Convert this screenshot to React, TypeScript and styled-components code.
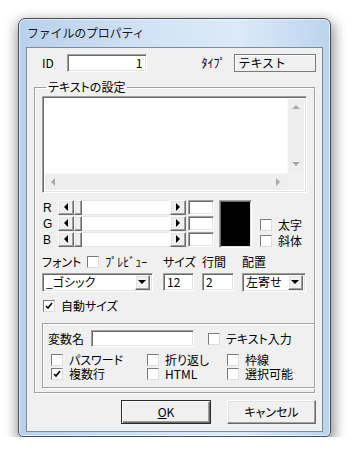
import React from 'react';
import styled, {createGlobalStyle, css} from 'styled-components';

const GlobalStyle = createGlobalStyle`
  body {
    margin: 0;
    background: #ffffff;
    font-family: "Noto Sans CJK JP", "Liberation Sans", sans-serif;
    font-size: 12px;
    line-height: 14px;
    color: #000000;
  }
`

// classic 3D borders
const sunken = css`
  box-sizing: border-box;
  border: 1px solid;
  border-color: #a0a0a0 #ffffff #ffffff #a0a0a0;
  box-shadow: inset 1px 1px 0 #696969, inset -1px -1px 0 #e3e3e3;
`

const raised = css`
  box-sizing: border-box;
  background: #f0f0f0;
  border: 1px solid;
  border-color: #ffffff #696969 #696969 #ffffff;
  box-shadow: inset -1px -1px 0 #a0a0a0, inset 1px 1px 0 #e3e3e3;
`

const Desktop = styled.div`
  padding: 18px 0 0 18px;
`

const Window = styled.div`
  width: 313px;
  height: 419px;
  box-sizing: border-box;
  border: 1px solid #44525f;
  border-radius: 7px 7px 5px 5px;
  background: linear-gradient(90deg, #b8d1ec 0%, #d3e4f6 45%, #dceaf8 70%, #bcd4ee 100%);
  box-shadow: 1px 5px 13px 2px rgba(0, 0, 0, 0.45), inset 0 0 0 1px rgba(255, 255, 255, 0.55);
  padding: 0 7px 4px;
  display: flex;
  flex-direction: column;
`

const TitleBar = styled.div`
  height: 28px;
  display: flex;
  align-items: center;
  padding-left: 1px;
  font-size: 12px;
  letter-spacing: -0.2px;
  color: #1a1a1a;
`

const Client = styled.div`
  flex: 1;
  background: #f0f0f0;
  border: 1px solid #7d8c9b;
  display: flex;
  flex-direction: column;
  padding: 6px 7px 0;
`

const TopRow = styled.div`
  display: flex;
  align-items: center;
  height: 18px;
  margin-right: -1px;
`

const Label = styled.span<{$w?: number; $ml?: number}>`
  display: inline-block;
  width: ${(p) => (p.$w ? `${p.$w}px` : 'auto')};
  margin-left: ${(p) => p.$ml ?? 0}px;
  white-space: nowrap;
  font-feature-settings: "palt";
`

const Edit = styled.div<{$w: number; $h?: number; $right?: boolean}>`
  ${sunken};
  width: ${(p) => p.$w}px;
  height: ${(p) => p.$h ?? 18}px;
  background: #ffffff;
  display: flex;
  align-items: center;
  justify-content: ${(p) => (p.$right ? 'flex-end' : 'flex-start')};
  padding: 0 3px;
  font-size: 12px;
`

const StaticBox = styled.div`
  box-sizing: border-box;
  width: 82px;
  height: 18px;
  margin-left: auto;
  border: 1px solid #7a7a7a;
  box-shadow: inset 1px 1px 0 #ffffff;
  display: flex;
  align-items: center;
  padding-left: 3px;
`

const Group = styled.fieldset`
  margin: 8px 0 0;
  padding: 2px 7px 4px;
  min-width: 0;
  border: 1px solid #a0a0a0;
  box-shadow: 1px 1px 0 #ffffff, inset 1px 1px 0 #ffffff;
  display: flex;
  flex-direction: column;
`

const Legend = styled.legend`
  margin-left: 4px;
  padding: 0 2px;
  line-height: 14px;
  font-feature-settings: "palt";
`

const TextArea = styled.div`
  ${sunken};
  height: 97px;
  background: #ffffff;
  display: grid;
  grid-template-columns: 1fr 17px;
  grid-template-rows: 1fr 17px;
  padding: 2px;
`

const DisabledBar = styled.div<{$vertical?: boolean}>`
  background: #eeeeee;
  display: flex;
  flex-direction: ${(p) => (p.$vertical ? 'column' : 'row')};
  justify-content: space-between;
  align-items: center;
  padding: ${(p) => (p.$vertical ? '6px 0' : '0 6px')};
  border-${(p) => (p.$vertical ? 'left' : 'top')}: 1px solid #f8f8f8;
`

const Corner = styled.div`
  background: #f0f0f0;
`

const Tri = ({dir, color}: {dir: 'l' | 'r' | 'u' | 'd'; color: string}) => {
  const pts = {
    l: '4,0 4,8 0,4',
    r: '0,0 0,8 4,4',
    u: '0,4 8,4 4,0',
    d: '0,0 8,0 4,4',
  }[dir];
  const horiz = dir === 'l' || dir === 'r';
  return (
    <svg width={horiz ? 5 : 9} height={horiz ? 9 : 5} viewBox={horiz ? '0 0 5 9' : '0 0 9 5'}>
      <polygon points={pts} fill={color}/>
    </svg>
  );
};

const ColorBlock = styled.div`
  display: flex;
  margin-top: 7px;
`

const SliderRows = styled.div`
  display: flex;
  flex-direction: column;
  gap: 1px;
`

const SliderRow = styled.div`
  display: flex;
  align-items: center;
  height: 15px;
`

const ChannelLabel = styled.span`
  width: 16px;
  font-size: 12px;
  font-family: "Liberation Sans", sans-serif;
  padding-left: 1px;
  box-sizing: border-box;
`

const Scroll = styled.div`
  display: flex;
  width: 128px;
  height: 15px;
`

const ArrowBtn = styled.div`
  ${raised};
  width: 16px;
  height: 15px;
  display: flex;
  align-items: center;
  justify-content: center;
`

const Thumb = styled.div`
  ${raised};
  width: 8px;
  height: 15px;
`

const Track = styled.div`
  flex: 1;
  background: #ffffff;
  border-top: 1px solid #e6e6e6;
  border-bottom: 1px solid #e6e6e6;
`

const Swatch = styled.div<{$color: string}>`
  ${sunken};
  width: 33px;
  height: 48px;
  margin-left: 5px;
  background: ${(p) => p.$color};
`

const StyleChecks = styled.div`
  display: flex;
  flex-direction: column;
  justify-content: flex-end;
  gap: 2px;
  margin-left: 8px;
`

const CheckWrap = styled.label`
  display: flex;
  align-items: center;
  gap: 6px;
  height: 14px;
  white-space: nowrap;
  font-feature-settings: "palt";
`

const Box = styled.span`
  box-sizing: border-box;
  width: 12px;
  height: 12px;
  flex: none;
  background: #ffffff;
  border: 1px solid;
  border-color: #7a7a7a #dcdcdc #dcdcdc #7a7a7a;
  display: flex;
  align-items: center;
  justify-content: center;
`

const Check = ({label, checked}: {label: string; checked?: boolean}) => (
  <CheckWrap>
    <Box>
      {checked && (
        <svg width="8" height="8" viewBox="0 0 8 8">
          <polyline points="1,4 3,6 7,1" fill="none" stroke="#000" strokeWidth="1.6"/>
        </svg>
      )}
    </Box>
    {label}
  </CheckWrap>
);

const FontGrid = styled.div`
  display: grid;
  grid-template-columns: 121px 39px 40px 64px;
  grid-template-rows: 14px 18px;
  row-gap: 4px;
  margin-top: 7px;
  align-items: center;
`

const LabelCell = styled.div`
  display: flex;
  align-items: center;
  gap: 6px;
  white-space: nowrap;
  font-feature-settings: "palt";
`

const Combo = styled.div<{$w: number}>`
  ${sunken};
  width: ${(p) => p.$w}px;
  height: 19px;
  background: #ffffff;
  display: flex;
  align-items: center;
  padding: 2px;
`

const ComboText = styled.span`
  flex: 1;
  padding-left: 1px;
  white-space: nowrap;
  font-feature-settings: "palt";
`

const DropBtn = styled.div`
  ${raised};
  width: 15px;
  height: 15px;
  display: flex;
  align-items: center;
  justify-content: center;
`

const AutoSize = styled.div`
  margin-top: 8px;
  margin-left: 1px;
`

const InnerGroup = styled.div`
  margin: 10px -8px 0 0;
  border: 1px solid #a0a0a0;
  box-shadow: 1px 1px 0 #ffffff, inset 1px 1px 0 #ffffff;
  padding: 6px 0 6px 5px;
  display: flex;
  flex-direction: column;
`

const VarRow = styled.div`
  display: flex;
  align-items: center;
  height: 17px;
  margin-bottom: 6px;
`

const OptionGrid = styled.div`
  display: grid;
  grid-template-columns: 96px 80px 1fr;
  padding-left: 3px;
`

const ButtonRow = styled.div`
  display: flex;
  justify-content: flex-end;
  gap: 16px;
  margin: 7px -1px 0 0;
`

const Button = styled.button<{$default?: boolean; $w: number}>`
  ${raised};
  width: ${(p) => p.$w}px;
  height: 24px;
  font: inherit;
  font-feature-settings: "palt";
  color: #000;
  padding: 0;
  ${(p) =>
    p.$default &&
    css`
      border-color: #2b2b2b;
      box-shadow: inset 1px 1px 0 #ffffff, inset -1px -1px 0 #696969, inset -2px -2px 0 #a0a0a0;
    `}
`

export default function App() {
  return (
    <>
      <GlobalStyle/>
      <Desktop>
        <Window>
          <TitleBar>ファイルのプロパティ</TitleBar>
          <Client>
            <TopRow>
              <Label $w={25} $ml={8}>ID</Label>
              <Edit $w={80} $right>1</Edit>
              <Label $w={33} $ml={55}>ﾀｲﾌﾟ</Label>
              <StaticBox>テキスト</StaticBox>
            </TopRow>

            <Group>
              <Legend>テキストの設定</Legend>
              <TextArea>
                <div/>
                <DisabledBar $vertical>
                  <Tri dir="u" color="#a8a8a8"/>
                  <Tri dir="d" color="#a8a8a8"/>
                </DisabledBar>
                <DisabledBar>
                  <Tri dir="l" color="#a8a8a8"/>
                  <Tri dir="r" color="#a8a8a8"/>
                </DisabledBar>
                <Corner/>
              </TextArea>

              <ColorBlock>
                <SliderRows>
                  {['R', 'G', 'B'].map((ch) => (
                    <SliderRow key={ch}>
                      <ChannelLabel>{ch}</ChannelLabel>
                      <Scroll>
                        <ArrowBtn><Tri dir="l" color="#000"/></ArrowBtn>
                        <Thumb/>
                        <Track/>
                        <ArrowBtn><Tri dir="r" color="#000"/></ArrowBtn>
                      </Scroll>
                      <Edit $w={26} $h={15} style={{marginLeft: 2}}/>
                    </SliderRow>
                  ))}
                </SliderRows>
                <Swatch $color="#000000"/>
                <StyleChecks>
                  <Check label="太字"/>
                  <Check label="斜体"/>
                </StyleChecks>
              </ColorBlock>

              <FontGrid>
                <LabelCell>
                  フォント
                  <Check label="ﾌﾟﾚﾋﾞｭｰ"/>
                </LabelCell>
                <LabelCell>サイズ</LabelCell>
                <LabelCell>行間</LabelCell>
                <LabelCell>配置</LabelCell>

                <Combo $w={111}>
                  <ComboText>_ゴシック</ComboText>
                  <DropBtn><Tri dir="d" color="#000"/></DropBtn>
                </Combo>
                <Edit $w={31}>12</Edit>
                <Edit $w={32}>2</Edit>
                <Combo $w={64}>
                  <ComboText>左寄せ</ComboText>
                  <DropBtn><Tri dir="d" color="#000"/></DropBtn>
                </Combo>
              </FontGrid>

              <AutoSize>
                <Check label="自動サイズ" checked/>
              </AutoSize>

              <InnerGroup>
                <VarRow>
                  <Label $w={43}>変数名</Label>
                  <Edit $w={103} $h={17}/>
                  <Label $ml={14}>
                    <Check label="テキスト入力"/>
                  </Label>
                </VarRow>
                <OptionGrid>
                  <Check label="パスワード"/>
                  <Check label="折り返し"/>
                  <Check label="枠線"/>
                  <Check label="複数行" checked/>
                  <Check label="HTML"/>
                  <Check label="選択可能"/>
                </OptionGrid>
              </InnerGroup>
            </Group>

            <ButtonRow>
              <Button $default $w={90}><u>O</u>K</Button>
              <Button $w={89}>キャンセル</Button>
            </ButtonRow>
          </Client>
        </Window>
      </Desktop>
    </>
  );
}
